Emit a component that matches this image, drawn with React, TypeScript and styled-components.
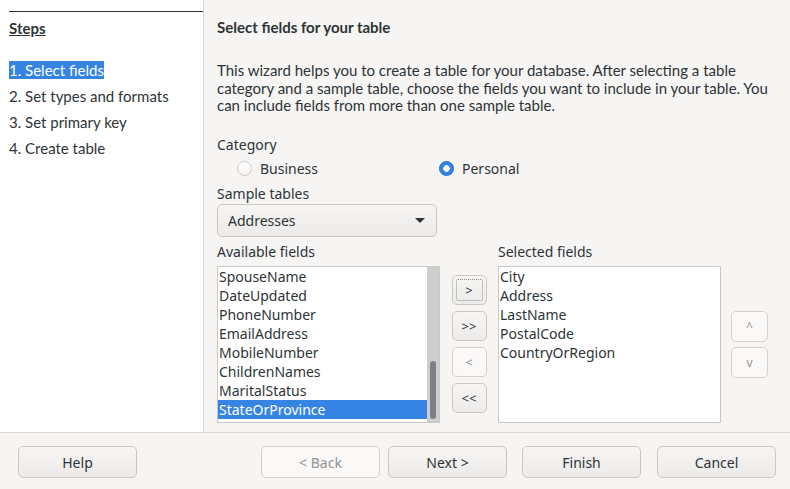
import styled, { createGlobalStyle, css } from "styled-components";

const GlobalStyle = createGlobalStyle`
  html, body {
    margin: 0;
    padding: 0;
    background: #f6f5f4;
  }
  body {
    font-family: "Noto Sans", "DejaVu Sans", sans-serif;
    color: #2e3436;
  }
`;

const steps = [
  "1. Select fields",
  "2. Set types and formats",
  "3. Set primary key",
  "4. Create table",
];

const available = [
  "SpouseName",
  "DateUpdated",
  "PhoneNumber",
  "EmailAddress",
  "MobileNumber",
  "ChildrenNames",
  "MaritalStatus",
  "StateOrProvince",
];

const selected = ["City", "Address", "LastName", "PostalCode", "CountryOrRegion"];

export default function App() {
  return (
    <>
      <GlobalStyle />
      <Dialog>
        <Main>
          <Sidebar>
            <StepsTitle>Steps</StepsTitle>
            <StepList>
              {steps.map((s, i) => (
                <Step key={s}>
                  <StepText $active={i === 0}>{s}</StepText>
                </Step>
              ))}
            </StepList>
          </Sidebar>
          <Content>
            <Title>Select fields for your table</Title>
            <Intro>
              This wizard helps you to create a table for your database. After selecting a table
              category and a sample table, choose the fields you want to include in your table. You
              can include fields from more than one sample table.
            </Intro>
            <Label>Category</Label>
            <RadioRow>
              <RadioOption>
                <RadioDot />
                Business
              </RadioOption>
              <RadioOption>
                <RadioDot $checked />
                Personal
              </RadioOption>
            </RadioRow>
            <Label>Sample tables</Label>
            <Dropdown>
              Addresses
              <Caret />
            </Dropdown>
            <FieldsGrid>
              <ListLabel>Available fields</ListLabel>
              <span />
              <ListLabel>Selected fields</ListLabel>
              <span />
              <ListBox>
                <Items>
                  {available.map((f, i) => (
                    <Item key={f} $selected={i === available.length - 1}>
                      {f}
                    </Item>
                  ))}
                </Items>
                <ScrollTrack>
                  <ScrollThumb />
                </ScrollTrack>
              </ListBox>
              <MoveButtons>
                <SmallButton $focused>&gt;</SmallButton>
                <SmallButton>&gt;&gt;</SmallButton>
                <SmallButton disabled>&lt;</SmallButton>
                <SmallButton>&lt;&lt;</SmallButton>
              </MoveButtons>
              <ListBox>
                <Items>
                  {selected.map((f) => (
                    <Item key={f}>{f}</Item>
                  ))}
                </Items>
              </ListBox>
              <OrderButtons>
                <OrderButton disabled>^</OrderButton>
                <OrderButton disabled>v</OrderButton>
              </OrderButtons>
            </FieldsGrid>
          </Content>
        </Main>
        <Footer>
          <DialogButton>Help</DialogButton>
          <Spacer />
          <DialogButton disabled>&lt; Back</DialogButton>
          <DialogButton>Next &gt;</DialogButton>
          <DialogButton $gap={15}>Finish</DialogButton>
          <DialogButton $gap={16}>Cancel</DialogButton>
        </Footer>
      </Dialog>
    </>
  );
}

const Dialog = styled.div`
  width: 790px;
  height: 489px;
  display: flex;
  flex-direction: column;
  background: #f6f5f4;
  overflow: hidden;
`;

const Main = styled.div`
  display: flex;
  height: 432px;
  border-bottom: 1px solid #dad6d2;
`;

const Sidebar = styled.aside`
  width: 194px;
  padding: 11px 0 0 9px;
  background: #ffffff;
  border-right: 1px solid #dad6d2;
  font-family: Lato, "Open Sans", sans-serif;
  font-size: 15px;
`;

const StepsTitle = styled.div`
  border-top: 1px solid #2e3436;
  padding-top: 7px;
  font-weight: 700;
  text-decoration: underline;
  line-height: 18px;
`;

const StepList = styled.ul`
  list-style: none;
  margin: 24px 0 0;
  padding: 0;
`;

const Step = styled.li`
  height: 26px;
`;

const StepText = styled.span<{ $active?: boolean }>`
  display: inline-block;
  line-height: 18px;
  ${(p) =>
    p.$active &&
    css`
      background: #3584e4;
      color: #ffffff;
    `}
`;

const Content = styled.section`
  flex: 1;
  padding: 18px 0 0 13px;
  display: flex;
  flex-direction: column;
  align-items: flex-start;
`;

const Title = styled.h1`
  margin: 0;
  font-family: Lato, "Open Sans", sans-serif;
  font-size: 15px;
  font-weight: 700;
  line-height: 18px;
`;

const Intro = styled.p`
  margin: 26px 0 0;
  width: 562px;
  font-family: Lato, "Open Sans", sans-serif;
  font-size: 15px;
  line-height: 17.5px;
`;

const Label = styled.div`
  margin-top: 21px;
  font-size: 14px;
  line-height: 18px;

  & + div + & {
    margin-top: 5px;
  }
`;

const RadioRow = styled.div`
  margin-top: 4px;
  display: flex;
  padding-left: 20px;
  height: 22px;
  align-items: center;
`;

const RadioOption = styled.label`
  display: flex;
  align-items: center;
  gap: 8px;
  width: 202px;
  font-size: 14px;
`;

const RadioDot = styled.span<{ $checked?: boolean }>`
  box-sizing: border-box;
  width: 15px;
  height: 15px;
  border-radius: 50%;
  border: 1px solid #cdc7c2;
  background: linear-gradient(#ffffff, #f4f2f1);
  ${(p) =>
    p.$checked &&
    css`
      border-color: #1b6acb;
      background: radial-gradient(circle, #ffffff 0 3px, #3584e4 3.5px);
    `}
`;

const buttonBase = css`
  box-sizing: border-box;
  border: 1px solid #cdc7c2;
  border-radius: 5px;
  background: linear-gradient(#f6f5f4, #edebe9);
  color: #2e3436;
  font-family: "Noto Sans", "DejaVu Sans", sans-serif;
  font-size: 14px;
  padding: 0;

  &:disabled {
    background: #faf9f8;
    color: #929595;
    border-color: #d5d0cc;
  }
`;

const Dropdown = styled.div`
  ${buttonBase};
  margin-top: 1px;
  width: 220px;
  height: 33px;
  display: flex;
  align-items: center;
  justify-content: space-between;
  padding: 0 11px 0 10px;
`;

const Caret = styled.span`
  width: 0;
  height: 0;
  border-left: 5px solid transparent;
  border-right: 5px solid transparent;
  border-top: 5px solid #2e3436;
`;

const FieldsGrid = styled.div`
  margin-top: 6px;
  display: grid;
  grid-template-columns: 223px 58px 223px 47px;
  grid-template-rows: 18px 157px;
  row-gap: 5px;
`;

const ListLabel = styled.div`
  font-size: 14px;
  line-height: 18px;
`;

const ListBox = styled.div`
  box-sizing: border-box;
  display: flex;
  background: #ffffff;
  border: 1px solid #cdc7c2;
`;

const Items = styled.ul`
  flex: 1;
  list-style: none;
  margin: 0;
  padding: 0;
`;

const Item = styled.li<{ $selected?: boolean }>`
  height: 19px;
  line-height: 19px;
  padding-left: 1px;
  font-size: 14px;
  ${(p) =>
    p.$selected &&
    css`
      background: #3584e4;
      color: #ffffff;
    `}
`;

const ScrollTrack = styled.div`
  width: 12px;
  background: #cecece;
  display: flex;
  flex-direction: column;
  justify-content: flex-end;
  align-items: center;
  padding-bottom: 3px;
`;

const ScrollThumb = styled.div`
  width: 6px;
  height: 58px;
  border-radius: 3px;
  background: #7e8087;
`;

const MoveButtons = styled.div`
  display: flex;
  flex-direction: column;
  align-items: center;
  justify-content: center;
  gap: 6px;
`;

const SmallButton = styled.button<{ $focused?: boolean }>`
  ${buttonBase};
  width: 35px;
  height: 30px;
  font-size: 13px;
  position: relative;
  ${(p) =>
    p.$focused &&
    css`
      &::after {
        content: "";
        position: absolute;
        inset: 3px;
        border: 1px dotted #8a8f91;
        border-radius: 2px;
      }
    `}
`;

const OrderButtons = styled.div`
  display: flex;
  flex-direction: column;
  align-items: flex-end;
  justify-content: center;
  gap: 5px;
`;

const OrderButton = styled.button`
  ${buttonBase};
  width: 37px;
  height: 31px;
  font-size: 12px;
`;

const Footer = styled.footer`
  flex: 1;
  display: flex;
  align-items: flex-start;
  padding: 13px 14px 0 18px;
  gap: 8px;
`;

const Spacer = styled.div`
  flex: 1;
`;

const DialogButton = styled.button<{ $gap?: number }>`
  ${buttonBase};
  width: 119px;
  height: 32px;
  margin-left: ${(p) => (p.$gap ? p.$gap - 8 : 0)}px;
`;
